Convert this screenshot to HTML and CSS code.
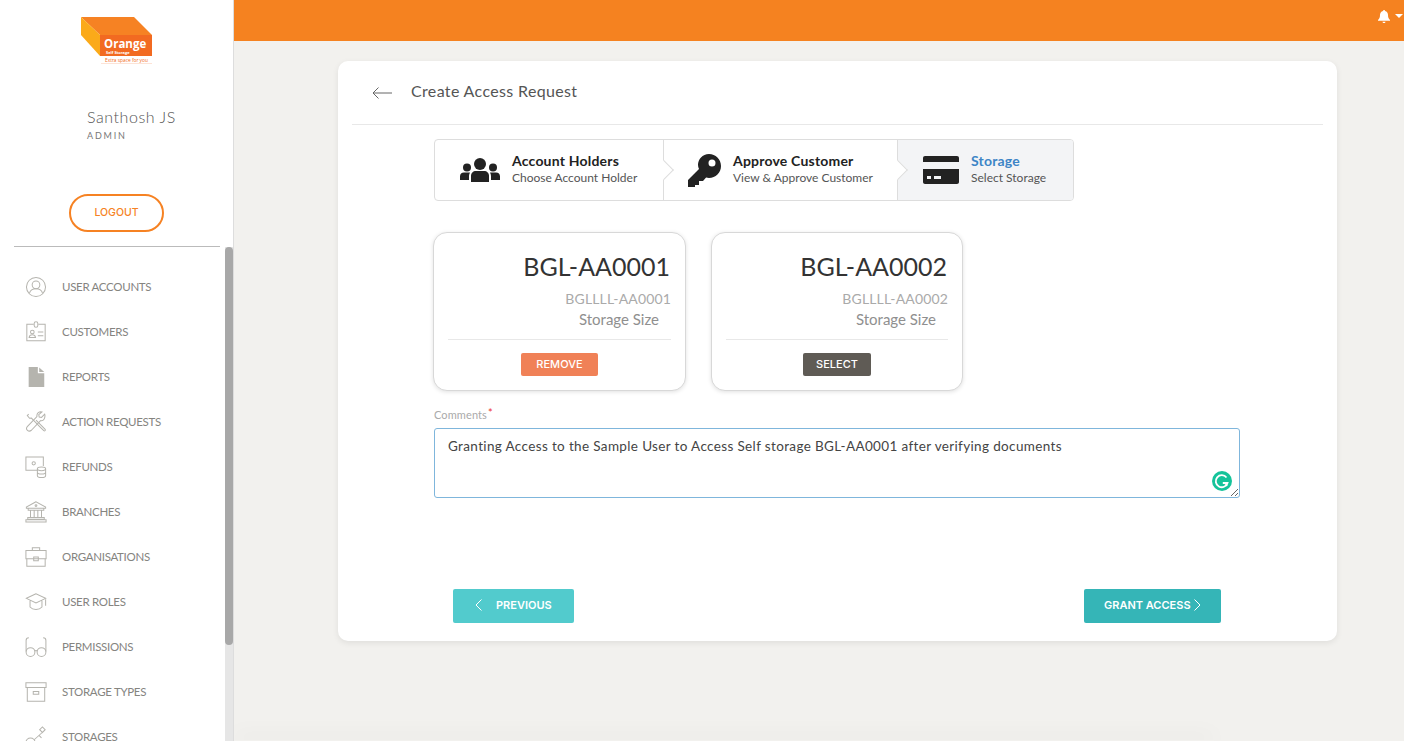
FILE: index.html
```html
<!DOCTYPE HTML>
<html>
<head>
  <meta http-equiv="Content-Type" content="text/html; charset=UTF-8">
  <title>Create Access Request</title>
  <link rel="stylesheet" href="styles.css">
</head>
<body>
  <div class="app">
    <aside class="sidebar">
      <div class="side-inner">
        <svg class="logo" width="72" height="48" viewBox="0 0 72 48">
          <polygon points="0,0 53,0 71,18 19,18" fill="#f68223"/>
          <polygon points="0,0 19,18 19,39 0,18" fill="#fbaa19"/>
          <rect x="19" y="18" width="52" height="21" fill="#f26a21"/>
          <text x="23" y="31" class="logo-name">Orange</text>
          <text x="25" y="36.500" class="logo-sub">Self Storage</text>
          <text x="24" y="45" class="logo-tag">Extra space for you</text>
          <rect x="20" y="46" width="51" height="1" fill="#fde3d6"/>
        </svg>
        <div class="user-name">Santhosh JS</div>
        <div class="user-role">ADMIN</div>
        <a class="logout">LOGOUT</a>
        <div class="side-rule"></div>
        <nav class="menu">
          <a class="menu-item">
            <svg class="ico" viewBox="0 0 24 24"><circle cx="12" cy="12" r="10.4"/><circle cx="12" cy="9.6" r="4.2"/><path d="M4.8 19c1-3.6 3.6-5 7.2-5s6.200 1.400 7.200 5"/></svg>
            USER ACCOUNTS
          </a>
          <a class="menu-item">
            <svg class="ico" viewBox="0 0 24 24"><path d="M9.500 3.500H2v18h20v-18h-7.500"/><rect x="10" y="0.800" width="4" height="6" rx="2"/><circle cx="8" cy="12" r="2"/><path d="M4.500 18c.3-2.300 1.500-3 3.500-3s3.200.7 3.500 3zM14 12h6M14 16h6"/></svg>
            CUSTOMERS
          </a>
          <a class="menu-item">
            <svg class="ico" viewBox="0 0 24 24"><path class="solid" d="M4 1h10v7h7v15a0 0 0 0 1 0 0H4z"/><path class="solid" d="M15.500 1.500l5.500 5h-5.500z"/></svg>
            REPORTS
          </a>
          <a class="menu-item">
            <svg class="ico" viewBox="0 0 24 24"><path d="M4 3.500L2.500 5l2.500 3 2-.3L16 17l4.500 4.500c1 .8 2.200-.4 1.500-1.500L12 10"/><path d="M21.500 3.500l-3.500 3.500-2.500-.5-.5-2.500 3.500-3c-3-.8-6 1.500-5.500 5L2.500 17c-2.500 3 1.500 6.500 4.500 4L17 10.500c3.500.8 5.500-3.500 4.500-7z"/></svg>
            ACTION REQUESTS
          </a>
          <a class="menu-item">
            <svg class="ico" viewBox="0 0 24 24"><path d="M14 15.500H1V1h19v10"/><circle cx="9.500" cy="8" r="1.800"/><ellipse cx="18" cy="14" rx="4.500" ry="2"/><path d="M13.500 14v7.500c0 2.600 9 2.600 9 0V14M13.500 17.700c0 2.600 9 2.600 9 0"/></svg>
            REFUNDS
          </a>
          <a class="menu-item">
            <svg class="ico" viewBox="0 0 24 24"><path d="M12 .8L1.500 6.500v1.500h21V6.500zM3.500 8v2h17V8M6 10v8M10 10v8M14 10v8M18 10v8M3 18h18v2H3zM1 20.500h22v2.500H1z"/><circle cx="12" cy="5" r="1"/></svg>
            BRANCHES
          </a>
          <a class="menu-item">
            <svg class="ico" viewBox="0 0 24 24"><path d="M8 5V2h8v3M1 5h22v9H1zM2 14v8h20v-8M9.500 12h5v4h-5z"/></svg>
            ORGANISATIONS
          </a>
          <a class="menu-item">
            <svg class="ico" viewBox="0 0 24 24"><path d="M12 3L1.500 8 12 13 22.500 8zM5.500 10.500v7c3 3.500 10 3.500 13 0v-7M22.500 9v7"/></svg>
            USER ROLES
          </a>
          <a class="menu-item">
            <svg class="ico" viewBox="0 0 24 24"><circle cx="6" cy="17.500" r="4.800"/><circle cx="18" cy="17.500" r="4.800"/><path d="M10.500 16.500c1-.8 2-.8 3 0M1.200 17V5c0-2 1-3 3-3M22.800 17V5c0-2-1-3-3-3"/></svg>
            PERMISSIONS
          </a>
          <a class="menu-item">
            <svg class="ico" viewBox="0 0 24 24"><path d="M1 2h22v5H1zM2.500 7v15h19V7M9 11.500h6v3H9z"/></svg>
            STORAGE TYPES
          </a>
          <a class="menu-item">
            <svg class="ico" viewBox="0 0 24 24"><circle cx="6" cy="18" r="5"/><path d="M10 15L20 6M15 10l3 3M19 7l-3-3 3-3 3 3z"/></svg>
            STORAGES
          </a>
        </nav>
      </div>
      <div class="side-track"><div class="side-thumb"></div></div>
    </aside>

    <main class="main">
      <header class="topbar">
        <svg class="bell" width="14" height="14" viewBox="0 0 14 14"><path d="M7 1c.6 0 1 .4 1 .9 2 .5 3 2 3 4.100 0 2.500.7 3.800 2 5v.7H1V11c1.300-1.200 2-2.500 2-5 0-2.100 1-3.600 3-4.100 0-.5.4-.9 1-.9zM5.500 12.700h3c0 .8-.7 1.300-1.500 1.300s-1.500-.5-1.500-1.300z"/></svg>
        <span class="caret"></span>
      </header>

      <div class="content">
        <section class="card">
          <div class="card-head">
            <svg class="back" width="20" height="12" viewBox="0 0 20 12"><path d="M20 6H1M6.500 .5L1 6l5.500 5.500"/></svg>
            <h1 class="card-title">Create Access Request</h1>
          </div>

          <div class="body">
            <div class="steps">
              <div class="step step-1">
                <svg class="step-ico" width="40" height="24" viewBox="0 0 40 24"><circle cx="20" cy="6" r="6"/><path d="M11 24v-6c0-3 2-5 5-5h8c3 0 5 2 5 5v6z"/><circle cx="7" cy="9.500" r="4"/><circle cx="33" cy="9.500" r="4"/><path d="M0 22v-3.500C0 16 1.500 14.500 4 14.500h6c-.6 1-1 2.200-1 3.500v4zM40 22v-3.500c0-2.500-1.500-4-4-4h-6c.6 1 1 2.200 1 3.500v4z"/></svg>
                <div class="step-text">
                  <div class="step-name">Account Holders</div>
                  <div class="step-sub">Choose Account Holder</div>
                </div>
                <span class="notch"></span>
              </div>
              <div class="step step-2">
                <svg class="step-ico" width="33" height="33" viewBox="0 0 33 33"><path fill-rule="evenodd" d="M21 0c6.600 0 12 5.400 12 12s-5.400 12-12 12c-1 0-2-.1-2.900-.4L15 27h-4v4H7v2H0v-7l11-11c-.6-1.200-1-2.500-1-4C10 5.400 14.400 0 21 0zm3 5.500a3.500 3.500 0 1 0 0 7 3.500 3.500 0 0 0 0-7z"/></svg>
                <div class="step-text">
                  <div class="step-name">Approve Customer</div>
                  <div class="step-sub">View &amp; Approve Customer</div>
                </div>
                <span class="notch"></span>
              </div>
              <div class="step step-3">
                <svg class="step-ico" width="36" height="28" viewBox="0 0 36 28"><path d="M2 0h32c1.100 0 2 .9 2 2v4H0V2C0 .9.900 0 2 0z"/><path fill-rule="evenodd" d="M0 13h36v13c0 1.100-.9 2-2 2H2c-1.100 0-2-.9-2-2zm4 7v3h4v-3zm7 0v3h7v-3z"/></svg>
                <div class="step-text">
                  <div class="step-name active">Storage</div>
                  <div class="step-sub">Select Storage</div>
                </div>
              </div>
            </div>

            <div class="lockers">
              <div class="locker">
                <div class="locker-code">BGL-AA0001</div>
                <div class="locker-sub">BGLLLL-AA0001</div>
                <div class="locker-size">Storage Size</div>
                <div class="locker-foot"><a class="small-btn remove">REMOVE</a></div>
              </div>
              <div class="locker">
                <div class="locker-code">BGL-AA0002</div>
                <div class="locker-sub">BGLLLL-AA0002</div>
                <div class="locker-size">Storage Size</div>
                <div class="locker-foot"><a class="small-btn select">SELECT</a></div>
              </div>
            </div>

            <label class="field-label">Comments<span class="req">*</span></label>
            <div class="field">
              <textarea class="comments">Granting Access to the Sample User to Access Self storage BGL-AA0001 after verifying documents</textarea>
              <svg class="grammarly" width="20" height="20" viewBox="0 0 20 20"><circle cx="10" cy="10" r="10" fill="#15c39a"/><path d="M14.500 6.500A6 6 0 1 0 15.500 12H10.800M13 12l2.500 2.500" fill="none" stroke="#fff" stroke-width="1.800"/></svg>
            </div>
          </div>

          <div class="actions">
            <a class="nav-btn prev">
              <svg width="7" height="12" viewBox="0 0 7 12"><path d="M6.500 .5L1 6l5.500 5.500"/></svg>
              PREVIOUS
            </a>
            <a class="nav-btn grant">
              GRANT ACCESS
              <svg width="7" height="12" viewBox="0 0 7 12"><path d="M.5 .5L6 6l-5.500 5.500"/></svg>
            </a>
          </div>
        </section>
      </div>
      <div class="page-foot"></div>
    </main>
  </div>
</body>
</html>
```

FILE: styles.css
```css
html, body {
    margin: 0;
    padding: 0;
    height: 100%;
    overflow: hidden;
    background-color: #f2f1ee;
    font-family: Lato, Arial, sans-serif;
}

.app {
    display: flex;
    height: 741px;
}

/* sidebar */

.sidebar {
    width: 234px;
    flex: none;
    display: flex;
    background-color: #fff;
    border-right: 1px solid #ddd;
    box-sizing: border-box;
    overflow: hidden;
    position: relative;
}

.side-inner {
    width: 225px;
    flex: none;
    padding-top: 17px;
    box-sizing: border-box;
}

.side-track {
    position: absolute;
    left: 225px;
    top: 247px;
    bottom: 0;
    width: 8px;
    background-color: #e6e6e6;
}

.side-thumb {
    height: 398px;
    border-radius: 4px;
    background-color: #a8a8a8;
}

.logo {
    display: block;
    margin-left: 81px;
}

.logo-name {
    font-family: "Open Sans", sans-serif;
    font-weight: 700;
    font-size: 11.500px;
    fill: #fff;
}

.logo-sub {
    font-family: "Open Sans", sans-serif;
    font-weight: 700;
    font-size: 4px;
    fill: #fff;
}

.logo-tag {
    font-family: "Open Sans", sans-serif;
    font-size: 4.800px;
    fill: #f26a21;
}

.user-name {
    margin: 42px 0 0 87px;
    font-size: 16px;
    line-height: 20px;
    letter-spacing: .55px;
    font-weight: 300;
    color: #555;
}

.user-role {
    margin: 3px 0 0 87px;
    font-size: 9px;
    line-height: 11px;
    letter-spacing: 1.800px;
    color: #777;
}

.logout {
    display: block;
    width: 95px;
    height: 38px;
    margin: 53px 0 0 69px;
    box-sizing: border-box;
    border: 2px solid #f68223;
    border-radius: 19px;
    text-align: center;
    line-height: 34px;
    font-family: Inter, sans-serif;
    font-size: 10.500px;
    font-weight: 500;
    color: #f68223;
}

.side-rule {
    width: 206px;
    height: 1px;
    margin: 14px 0 0 14px;
    background-color: #bbb;
}

.menu {
    margin-top: 17px;
}

.menu-item {
    display: flex;
    align-items: center;
    gap: 15px;
    height: 45px;
    padding-left: 25px;
    font-size: 11.500px;
    letter-spacing: -.3px;
    color: #85847f;
    white-space: nowrap;
}

.ico {
    width: 22px;
    height: 22px;
    flex: none;
    fill: none;
    stroke: #b5b4ae;
    stroke-width: 1.100;
}

.ico .solid {
    fill: #b5b4ae;
    stroke: none;
}

/* main */

.main {
    flex: 1;
    display: flex;
    flex-direction: column;
    min-width: 0;
}

.topbar {
    height: 41px;
    flex: none;
    display: flex;
    justify-content: flex-end;
    gap: 4px;
    padding: 9px 1px 0 0;
    box-sizing: border-box;
    background-color: #f58220;
}

.bell {
    fill: #fff;
}

.caret {
    width: 0;
    height: 0;
    margin-top: 5px;
    border-left: 4px solid transparent;
    border-right: 4px solid transparent;
    border-top: 4px solid #fff;
}

.content {
    flex: 1;
    padding: 20px 67px 0 104px;
}

.page-foot {
    height: 1px;
    flex: none;
    margin-right: 190px;
    box-shadow: 0 -3px 20px rgba(0, 0, 0, .3);
}

.card {
    height: 580px;
    display: flex;
    flex-direction: column;
    padding: 0 14px;
    box-sizing: border-box;
    border-radius: 10px;
    background-color: #fff;
    box-shadow: 0 2px 6px rgba(0, 0, 0, .08);
}

.card-head {
    height: 59px;
    flex: none;
    display: flex;
    align-items: center;
    gap: 19px;
    padding: 0 0 4px 20px;
    border-bottom: 1px solid #e8e8e8;
}

.back {
    margin-top: 4px;
    fill: none;
    stroke: #666;
}

.card-title {
    margin: 0;
    font-size: 16px;
    font-weight: 400;
    letter-spacing: .35px;
    color: #555;
}

.body {
    flex: 1;
    padding: 14px 83px 0 82px;
}

/* steps */

.steps {
    display: flex;
    width: 640px;
    height: 62px;
    box-sizing: border-box;
    border: 1px solid #ddd;
    border-radius: 4px;
}

.step {
    display: flex;
    align-items: center;
    position: relative;
    box-sizing: border-box;
}

.step-1 {
    width: 229px;
    padding-left: 25px;
    gap: 12px;
    border-right: 1px solid #ddd;
}

.step-2 {
    width: 234px;
    padding-left: 24px;
    gap: 12px;
    border-right: 1px solid #ddd;
}

.step-3 {
    flex: 1;
    padding-left: 25px;
    gap: 12px;
    background-color: #f3f4f6;
    border-radius: 0 3px 3px 0;
}

.notch {
    position: absolute;
    right: -8px;
    top: 23px;
    width: 14px;
    height: 14px;
    z-index: 1;
    box-sizing: border-box;
    background-color: #fff;
    border-top: 1px solid #ddd;
    border-right: 1px solid #ddd;
    transform: rotate(45deg);
}

.step-ico {
    flex: none;
    fill: #222;
}

.step-text {
    margin-top: -2px;
}

.step-name {
    font-size: 14px;
    line-height: 18px;
    letter-spacing: .2px;
    font-weight: 700;
    color: #222;
}

.step-name.active {
    color: #3d85c6;
}

.step-sub {
    font-size: 12px;
    line-height: 16px;
    color: #555;
}

/* storage cards */

.lockers {
    display: flex;
    gap: 25px;
    margin: 31px 0 0 -1px;
}

.locker {
    width: 253px;
    height: 159px;
    box-sizing: border-box;
    padding: 0 14px;
    border: 1px solid #d8d8d8;
    border-radius: 14px;
    background-color: #fff;
    box-shadow: 0 1px 4px rgba(0, 0, 0, .12);
    text-align: right;
}

.locker + .locker {
    width: 252px;
}

.locker-code {
    margin: 16px 1px 0 0;
    font-size: 25px;
    line-height: 34px;
    color: #333;
}

.locker-sub {
    margin-top: 6px;
    font-size: 14px;
    line-height: 20px;
    letter-spacing: .15px;
    color: #aaa;
}

.locker-size {
    margin: 0 12px 0 0;
    font-size: 15px;
    line-height: 20px;
    color: #8f8f8f;
}

.locker-foot {
    margin-top: 10px;
    padding-top: 12px;
    border-top: 1px solid #e8e8e8;
    text-align: center;
}

.small-btn {
    display: inline-block;
    height: 23px;
    line-height: 23px;
    border-radius: 2px;
    font-family: Inter, sans-serif;
    font-size: 11px;
    font-weight: 500;
    color: #fff;
}

.remove {
    width: 77px;
    background-color: #f08157;
}

.select {
    width: 68px;
    background-color: #5f5b55;
}

/* comments */

.field-label {
    display: block;
    margin-top: 15px;
    font-size: 11px;
    line-height: 14px;
    letter-spacing: .1px;
    color: #aaa;
}

.req {
    color: #e33;
    vertical-align: 2px;
    margin-left: 1px;
}

.field {
    position: relative;
    margin-top: 6px;
    width: 806px;
}

.comments {
    display: block;
    width: 806px;
    height: 70px;
    box-sizing: border-box;
    padding: 8px 13px;
    border: 1px solid #7fb6dc;
    border-radius: 3px;
    outline: none;
    font-family: Lato, Arial, sans-serif;
    font-size: 13.500px;
    line-height: 18px;
    letter-spacing: .355px;
    color: #444;
}

.grammarly {
    position: absolute;
    right: 8px;
    bottom: 7px;
}

/* bottom buttons */

.actions {
    display: flex;
    justify-content: space-between;
    padding: 0 102px 18px 101px;
}

.nav-btn {
    display: flex;
    align-items: center;
    height: 34px;
    box-sizing: border-box;
    padding-bottom: 2px;
    border-radius: 2px;
    font-family: Inter, sans-serif;
    font-size: 11px;
    font-weight: 600;
    color: #fff;
}

.nav-btn svg {
    fill: none;
    stroke: #fff;
}

.prev {
    width: 121px;
    padding-left: 22px;
    gap: 14px;
    background-color: #52cbcd;
}

.grant {
    width: 137px;
    padding-left: 20px;
    gap: 3px;
    background-color: #35b5b7;
}
```
